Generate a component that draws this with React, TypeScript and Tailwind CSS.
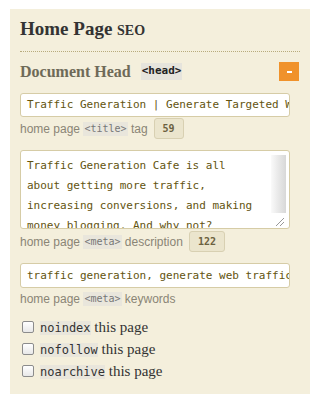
import React from 'react';

const mono = "font-['DejaVu_Sans_Mono','Liberation_Mono',monospace]";
const serif = "font-['Liberation_Serif','Times_New_Roman',serif]";
const sans = "font-['Liberation_Sans','Arial',sans-serif]";

const Code: React.FC<{ children: React.ReactNode }> = ({ children }) => (
  <code className={`${mono} bg-[#e9e6dc] px-[1px] text-[10px] leading-[14px] text-[#777]`}>{children}</code>
);

const Badge: React.FC<{ value: number }> = ({ value }) => (
  <span className={`${mono} ml-[6px] inline-flex h-[21px] items-center rounded-[3px] border border-[#d8d0b2] bg-[#ebe5cd] px-[8px] text-[10px] font-bold text-[#6b6140]`}>
    {value}
  </span>
);

const flags = ['noindex', 'nofollow', 'noarchive'];

export default function App() {
  return (
    <div className="min-h-[396px] bg-white pt-[9px] pl-[10px]">
      <div className="w-[300px] bg-[#f4efdc] px-[10px] pt-[9px] pb-[14px]">
        {/* TITULO */}
        <h1 className={`${serif} text-[19px] font-bold leading-[22px] text-[#333]`}>
          Home Page <span className="text-[14px]">SEO</span>
        </h1>
        <div className="mt-[9px] border-b border-dotted border-[#b8ab7c]" />

        {/* DOCUMENT HEAD */}
        <div className="mt-[10px] flex h-[19px] items-center justify-between">
          <div className="flex items-center gap-[10px]">
            <span className={`${serif} text-[16px] font-bold text-[#6e6a58]`}>Document Head</span>
            <code className={`${mono} bg-[#e6e4dc] px-[1px] text-[11px] font-bold text-[#222]`}>&lt;head&gt;</code>
          </div>
          <button className="mr-[1px] flex h-[19px] w-[20px] items-center justify-center bg-[#f0922b]">
            <span className="block h-[2px] w-[5px] bg-white" />
          </button>
        </div>

        {/* TITLE */}
        <div className="mt-[12px] h-[24px] w-[270px] overflow-hidden rounded-[3px] border border-[#d6cca6] bg-white px-[6px] py-[4px]">
          <div className={`${mono} whitespace-nowrap text-[11px] leading-[14px] text-[#63540f]`}>
            Traffic Generation | Generate Targeted Web
          </div>
        </div>
        <div className={`${sans} mt-[1px] flex h-[21px] items-center text-[12px] text-[#8a8576]`}>
          home page&nbsp;<Code>&lt;title&gt;</Code>&nbsp;tag <Badge value={59} />
        </div>

        {/* DESCRIPTION */}
        <div className="mt-[11px] flex h-[79px] w-[270px] overflow-hidden rounded-[3px] border border-[#d6cca6] bg-white">
          <div className={`${mono} w-[244px] px-[6px] pt-[5px] text-[11px] leading-[20px] text-[#63540f]`}>
            Traffic Generation Cafe is all about getting more traffic, increasing conversions, and making money blogging. And why not?
          </div>
          <div className="mt-[4px] ml-auto mr-[3px] flex w-[15px] flex-col">
            <div className="h-[58px] bg-gradient-to-r from-[#fafafa] via-[#e8e8e8] to-[#d8d8d8]" />
            <svg width="15" height="15" viewBox="0 0 15 15">
              <path d="M5 13 L13 5 M9 13 L13 9" stroke="#999" strokeWidth="1" />
            </svg>
          </div>
        </div>
        <div className={`${sans} mt-[2px] flex h-[21px] items-center text-[12px] text-[#8a8576]`}>
          home page&nbsp;<Code>&lt;meta&gt;</Code>&nbsp;description <Badge value={122} />
        </div>

        {/* KEYWORDS */}
        <div className="mt-[11px] h-[25px] w-[270px] overflow-hidden rounded-[3px] border border-[#d6cca6] bg-white px-[6px] py-[4px]">
          <div className={`${mono} whitespace-nowrap text-[11px] leading-[15px] text-[#63540f]`}>
            traffic generation, generate web traffic
          </div>
        </div>
        <div className={`${sans} mt-[3px] flex h-[16px] items-center text-[12px] text-[#8a8576]`}>
          home page&nbsp;<Code>&lt;meta&gt;</Code>&nbsp;keywords
        </div>

        {/* FLAGS */}
        <div className="mt-[11px] flex flex-col gap-[4px] pl-[2px]">
          {flags.map((f) => (
            <label key={f} className="flex h-[18px] items-center gap-[6px]">
              <span className="h-[12px] w-[12px] rounded-[2px] border border-[#8c8c8c] bg-gradient-to-b from-white to-[#e8e8e8]" />
              <span className={`${serif} text-[15px] leading-[18px] text-[#333]`}>
                <code className={`${mono} bg-[#e9e6dc] text-[12px] text-[#333]`}>{f}</code> this page
              </span>
            </label>
          ))}
        </div>
      </div>
    </div>
  );
}
